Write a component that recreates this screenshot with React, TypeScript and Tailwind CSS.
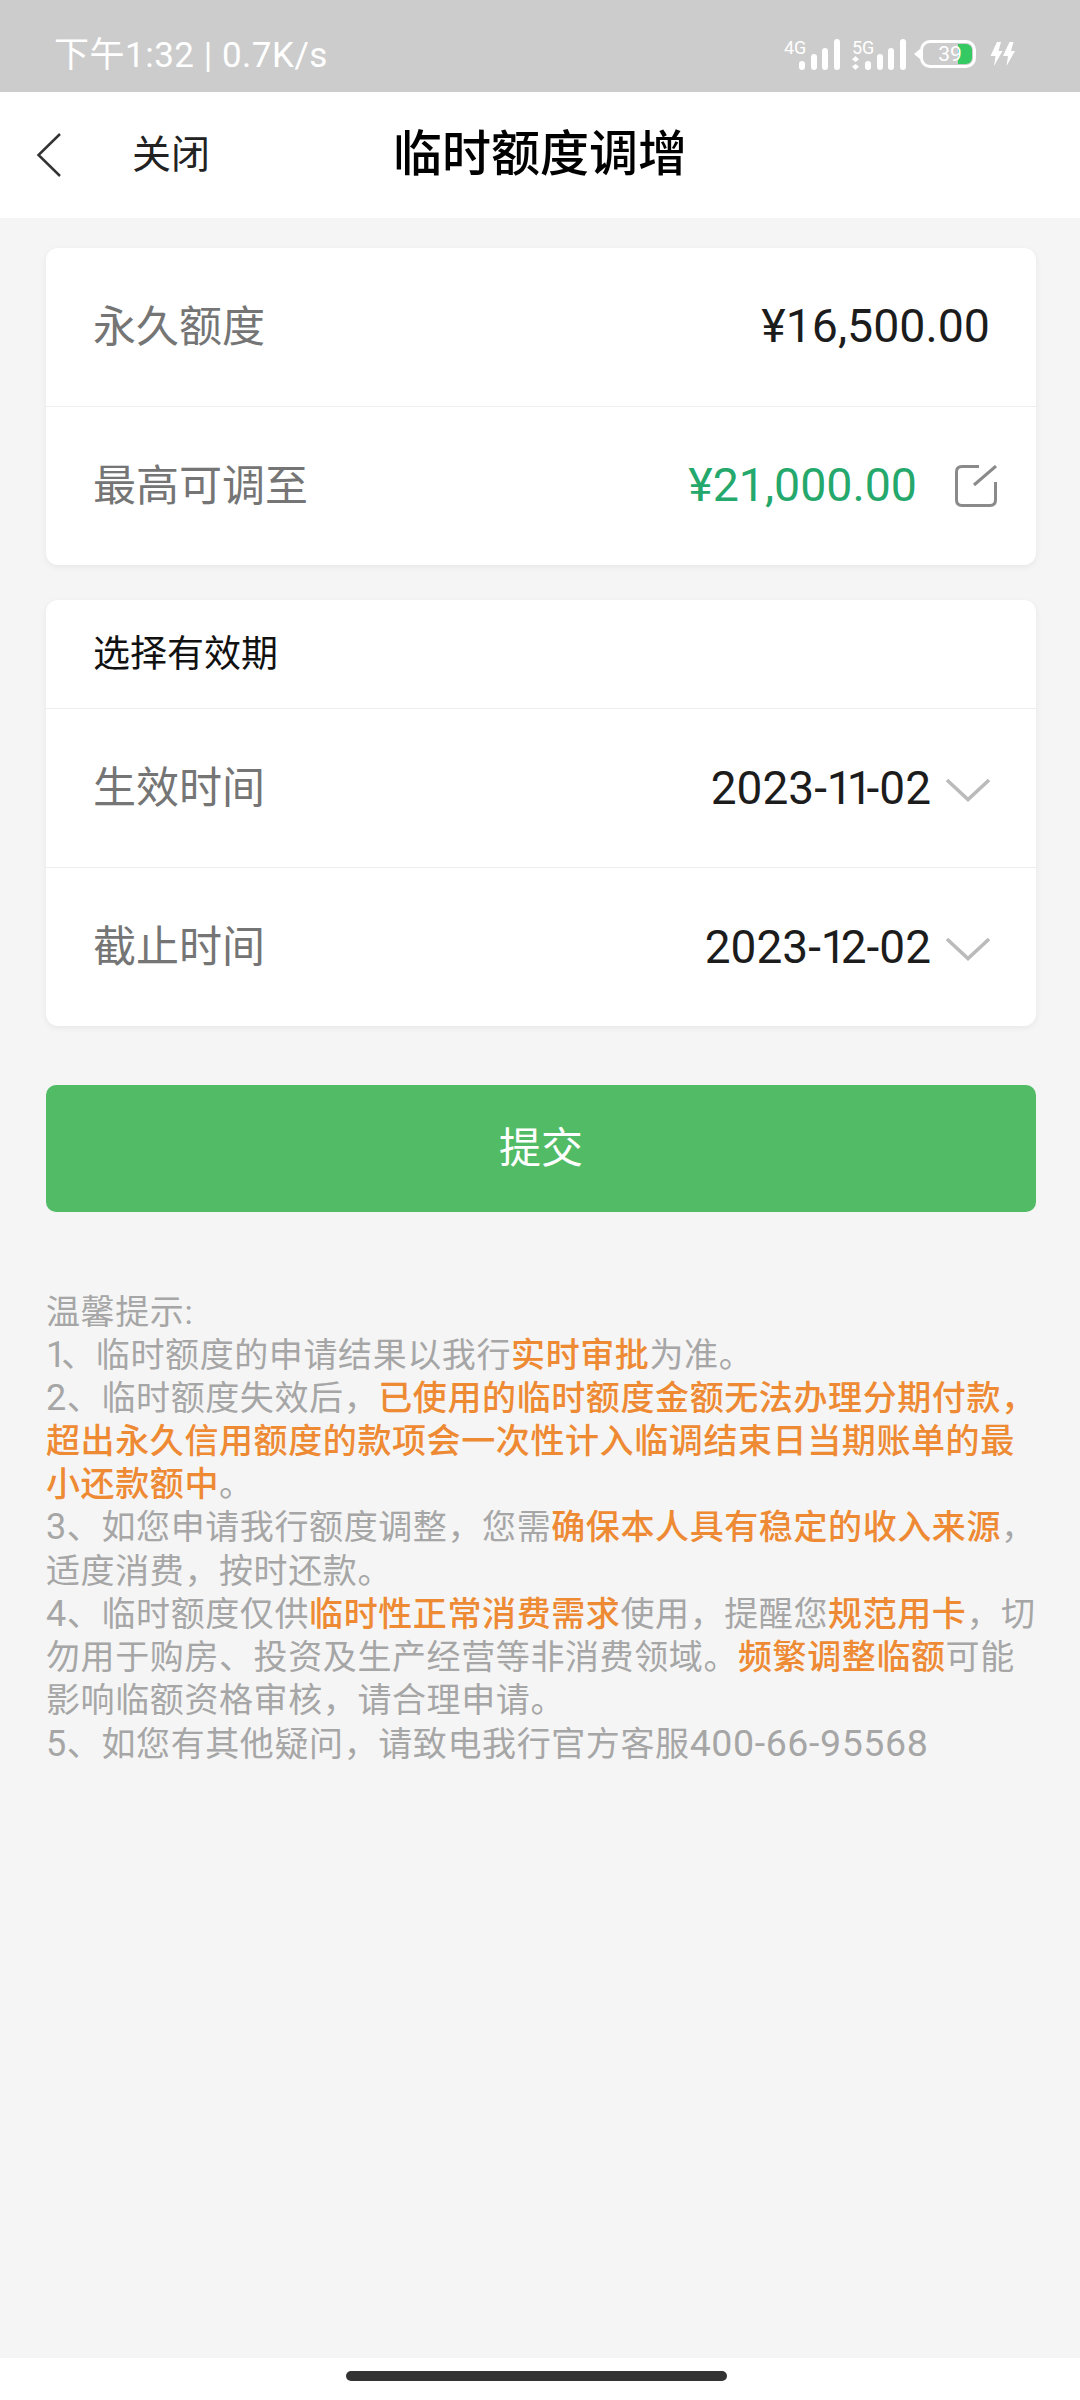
import React from 'react';

const cjk = "font-['Roboto','Noto_Sans_CJK_SC',sans-serif]";

const Hi = ({ children }: { children: React.ReactNode }) => (
  <span className="font-medium text-[#ee8a33]">{children}</span>
);

// list digits run a little larger than the CJK text in the reference
const Num = ({ children }: { children: React.ReactNode }) => <span className="text-[36px]">{children}</span>;

const SignalBars = () => (
  <svg width="41" height="31" viewBox="0 0 41 31" fill="#ffffff">
    <rect x="0" y="22" width="6" height="9" rx="3" />
    <rect x="12" y="15" width="6" height="16" rx="3" />
    <rect x="23" y="9" width="6" height="22" rx="3" />
    <rect x="35" y="0" width="6" height="31" rx="3" />
  </svg>
);

const StatusBar = () => (
  <div className="h-[92px] bg-[#cccccc] flex items-center justify-between pt-[16px] pl-[54px] pr-[65px] text-white">
    <div className="text-[35px] tracking-[0.5px] leading-none mt-[2px]">下午1:32 | 0.7K/s</div>
    <div className="flex items-center">
      <div className="relative w-[56px] h-[31px] flex justify-end">
        <span className="absolute left-0 top-[-1px] text-[18px] leading-[20px]">4G</span>
        <SignalBars />
      </div>
      <div className="relative w-[54px] h-[31px] ml-[12px] flex justify-end">
        <span className="absolute left-0 top-[-1px] text-[18px] leading-[20px]">5G</span>
        <svg className="absolute left-0 top-[17px]" width="7" height="14" viewBox="0 0 7 14" fill="#ffffff">
          <path d="M3.5 0 L7 3.5 L3.5 6 L0 3.5 Z" />
          <path d="M3.5 14 L7 10.5 L3.5 8 L0 10.5 Z" />
        </svg>
        <div className="w-[41px] flex justify-end">
          <SignalBars />
        </div>
      </div>
      {/* battery */}
      <div className="relative w-[56px] h-[28px] ml-[14px] border-[3px] border-white rounded-[10px]">
        <div className="absolute left-[-9px] top-[6px] w-0 h-0 border-y-[5px] border-y-transparent border-r-[6px] border-r-white" />
        <div className="absolute right-[1px] top-[1px] bottom-[1px] w-[14px] rounded-r-[6px] bg-[#35c964]" />
        <span className="absolute inset-0 flex items-center justify-center pl-[4px] text-[21px] leading-none">39</span>
      </div>
      <svg className="ml-[14px]" width="25" height="24" viewBox="0 0 25 24" fill="#ffffff">
        <path d="M7 0 H11 L8.5 9 H12.5 L4 24 L5.5 14 H0.5 Z" />
        <path d="M19.5 0 H23.5 L21 9 H25 L16.5 24 L18 14 H13 Z" />
      </svg>
    </div>
  </div>
);

const NavBar = () => (
  <div className="relative h-[126px] bg-white flex items-center justify-center">
    <div className="absolute left-[36px] top-0 bottom-0 flex items-center">
      <svg width="26" height="46" viewBox="0 0 26 46" fill="none" stroke="#333333" strokeWidth="2.5">
        <path d="M24 2 L2.5 23 L24 44" />
      </svg>
      <span className="ml-[70px] text-[39px] text-[#222222]">关闭</span>
    </div>
    <span className="text-[49px] font-medium text-black">临时额度调增</span>
  </div>
);

const Chevron = () => (
  <svg className="ml-[15px] mt-[4px]" width="44" height="24" viewBox="0 0 44 24" fill="none" stroke="#bbbbbb" strokeWidth="3.5">
    <path d="M1 2 L22 21.5 L43 2" />
  </svg>
);

const Row = ({ label, children, last }: { label: string; children: React.ReactNode; last?: boolean }) => (
  <div className={`flex items-center justify-between pl-[47px] pr-[46px] ${last ? 'h-[158px]' : 'h-[159px] border-b border-[#eeeeee]'}`}>
    <span className="text-[43px] text-[#757575]">{label}</span>
    <div className="flex items-center">{children}</div>
  </div>
);

// the "1" is narrow in the reference's digits
const One = () => <span className="tracking-[-6px]">1</span>;

export default function App() {
  return (
    <div className={`flex flex-col h-[2400px] bg-[#f5f5f5] ${cjk}`}>
      <StatusBar />
      <NavBar />

      <main className="flex-1 pl-[46px] pr-[44px] pt-[30px]">
        <div className="bg-white rounded-[12px] shadow-[0_2px_6px_rgba(0,0,0,0.06)]">
          <Row label="永久额度">
            <span className="text-[46.5px] text-[#1c1c1c]">¥16,500.00</span>
          </Row>
          <Row label="最高可调至" last>
            <span className="text-[46.5px] text-[#24a86b]">¥21,000.00</span>
            <svg className="ml-[38px] mr-[-7px]" width="42" height="42" viewBox="0 0 42 42" fill="none" stroke="#8a8a8a" strokeWidth="3">
              <path d="M24 1.5 H7 Q1.5 1.5 1.5 7 V35 Q1.5 40.5 7 40.5 H35 Q40.5 40.5 40.5 35 V17" />
              <path d="M19 20 L41 1" />
            </svg>
          </Row>
        </div>

        <div className="mt-[35px] bg-white rounded-[12px] shadow-[0_2px_6px_rgba(0,0,0,0.06)]">
          <div className="h-[109px] flex items-center pt-[2px] pl-[47px] text-[37px] text-[#111111] border-b border-[#eeeeee]">选择有效期</div>
          <Row label="生效时间">
            <span className="text-[46px] text-[#1c1c1c]">2023-<One /><One />-02</span>
            <Chevron />
          </Row>
          <Row label="截止时间" last>
            <span className="text-[46px] text-[#1c1c1c]">2023-<One />2-02</span>
            <Chevron />
          </Row>
        </div>

        <button className="mt-[59px] w-full h-[127px] rounded-[10px] bg-[#52bb66] text-white text-[42px]">提交</button>

        <div className="mt-[79px] text-[34px] leading-[43.1px] tracking-[0.6px] text-[#a6a6a6]">
          <p>温馨提示:</p>
          <p><span className="text-[36px] tracking-[-5px]">1</span>、临时额度的申请结果以我行<Hi>实时审批</Hi>为准。</p>
          <p><Num>2</Num>、临时额度失效后，<Hi>已使用的临时额度金额无法办理分期付款，超出永久信用额度的款项会一次性计入临调结束日当期账单的最小还款额中</Hi>。</p>
          <p><Num>3</Num>、如您申请我行额度调整，您需<Hi>确保本人具有稳定的收入来源</Hi>，适度消费，按时还款。</p>
          <p><Num>4</Num>、临时额度仅供<Hi>临时性正常消费需求</Hi>使用，提醒您<Hi>规范用卡</Hi>，切勿用于购房、投资及生产经营等非消费领域。<Hi>频繁调整临额</Hi>可能影响临额资格审核，请合理申请。</p>
          <p><Num>5</Num>、如您有其他疑问，请致电我行官方客服<span className="text-[37.5px]">400-66-95568</span></p>
        </div>
      </main>

      <div className="h-[42px] bg-white flex justify-center pt-[13px] pr-[7px]">
        <div className="w-[381px] h-[10px] rounded-full bg-[#333333]" />
      </div>
    </div>
  );
}
